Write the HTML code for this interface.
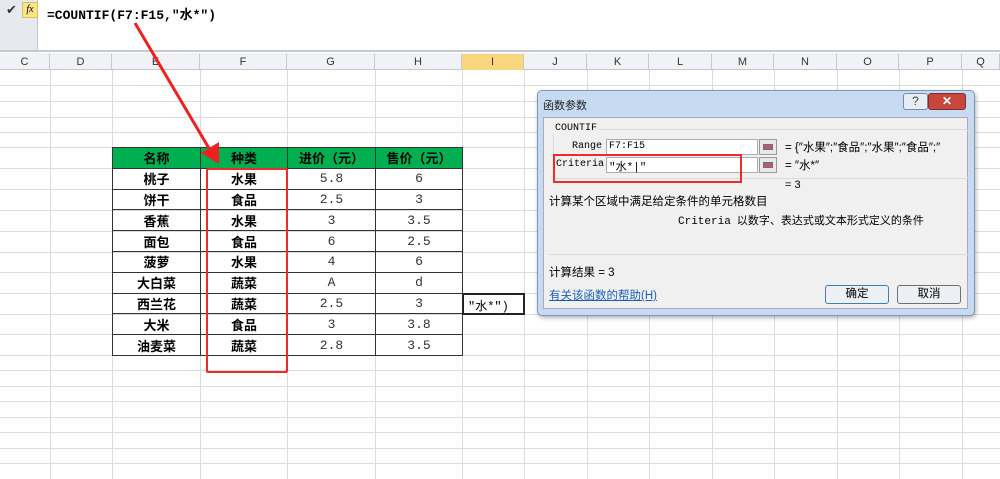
<!DOCTYPE html><html><head><meta charset="utf-8"><style>
*{margin:0;padding:0;box-sizing:border-box}
body{width:1000px;height:479px;overflow:hidden;background:#fff;position:relative;font-family:"Liberation Sans","Noto Sans CJK SC",sans-serif}
.a{position:absolute}
.hl{position:absolute;left:0;width:1000px;height:1px;background:#dadcdd}
.vl{position:absolute;top:70px;height:409px;width:1px;background:#dadcdd}
.ch{position:absolute;top:54px;height:16px;font-size:11px;color:#333;text-align:center;line-height:16px;border-right:1px solid #c5c9cf}
table{position:absolute;left:112px;top:147px;border-collapse:collapse;font-size:13px}
td{border:1px solid #333;height:20.8px;text-align:center;padding:0;font-weight:bold;font-family:"Noto Sans CJK SC",sans-serif}
td.n{font-weight:normal;font-family:"Liberation Mono",monospace;color:#333}
tr.h td{background:#00b050}
.mono{font-family:"Liberation Mono","Noto Sans CJK SC",monospace}
</style></head><body>
<div class="a" style="left:0;top:0;width:1000px;height:52px;background:#fff;border-bottom:2px solid #c5c9cf"></div>
<div class="a" style="left:0;top:0;width:38px;height:50px;background:#e6e9ee;border-right:1px solid #c5c9cf"></div>
<div class="a" style="left:6px;top:2px;font-size:13px;color:#333">✔</div>
<div class="a" style="left:22px;top:2px;width:16px;height:16px;background:#f8e58c;border:1px solid #d8c060;font-size:10px;font-style:italic;font-family:'Liberation Serif';text-align:center;line-height:14px">fx</div>
<div class="a mono" style="left:47px;top:4px;font-size:13px;font-weight:bold">=COUNTIF(F7:F15,″水*″)</div>
<div class="a" style="left:0;top:53px;width:1000px;height:17px;background:#f0f2f5;border-bottom:1px solid #c5c9cf"></div>
<div class="ch" style="left:0;width:50px">C</div><div class="ch" style="left:50px;width:62px">D</div><div class="ch" style="left:112px;width:88px">E</div><div class="ch" style="left:200px;width:87px">F</div><div class="ch" style="left:287px;width:88px">G</div><div class="ch" style="left:375px;width:87px">H</div><div class="ch" style="left:462px;width:62px;background:#f9d77e">I</div><div class="ch" style="left:524px;width:63px">J</div><div class="ch" style="left:587px;width:62px">K</div><div class="ch" style="left:649px;width:63px">L</div><div class="ch" style="left:712px;width:62px">M</div><div class="ch" style="left:774px;width:63px">N</div><div class="ch" style="left:837px;width:62px">O</div><div class="ch" style="left:899px;width:63px">P</div><div class="ch" style="left:962px;width:38px">Q</div>
<div class="hl" style="top:85px"></div><div class="hl" style="top:101px"></div><div class="hl" style="top:117px"></div><div class="hl" style="top:132px"></div><div class="hl" style="top:147px"></div><div class="hl" style="top:168px"></div><div class="hl" style="top:189px"></div><div class="hl" style="top:210px"></div><div class="hl" style="top:231px"></div><div class="hl" style="top:252px"></div><div class="hl" style="top:272px"></div><div class="hl" style="top:293px"></div><div class="hl" style="top:314px"></div><div class="hl" style="top:334px"></div><div class="hl" style="top:355px"></div><div class="hl" style="top:370px"></div><div class="hl" style="top:386px"></div><div class="hl" style="top:401px"></div><div class="hl" style="top:417px"></div><div class="hl" style="top:432px"></div><div class="hl" style="top:448px"></div><div class="hl" style="top:463px"></div>
<div class="vl" style="left:50px"></div><div class="vl" style="left:112px"></div><div class="vl" style="left:200px"></div><div class="vl" style="left:287px"></div><div class="vl" style="left:375px"></div><div class="vl" style="left:462px"></div><div class="vl" style="left:524px"></div><div class="vl" style="left:587px"></div><div class="vl" style="left:649px"></div><div class="vl" style="left:712px"></div><div class="vl" style="left:774px"></div><div class="vl" style="left:837px"></div><div class="vl" style="left:899px"></div><div class="vl" style="left:962px"></div>
<table><colgroup><col style="width:88px"><col style="width:87px"><col style="width:88px"><col style="width:87px"></colgroup>
<tr class="h"><td>名称</td><td>种类</td><td>进价（元）</td><td>售价（元）</td></tr>
<tr><td>桃子</td><td>水果</td><td class="n">5.8</td><td class="n">6</td></tr>
<tr><td>饼干</td><td>食品</td><td class="n">2.5</td><td class="n">3</td></tr>
<tr><td>香蕉</td><td>水果</td><td class="n">3</td><td class="n">3.5</td></tr>
<tr><td>面包</td><td>食品</td><td class="n">6</td><td class="n">2.5</td></tr>
<tr><td>菠萝</td><td>水果</td><td class="n">4</td><td class="n">6</td></tr>
<tr><td>大白菜</td><td>蔬菜</td><td class="n">A</td><td class="n">d</td></tr>
<tr><td>西兰花</td><td>蔬菜</td><td class="n">2.5</td><td class="n">3</td></tr>
<tr><td>大米</td><td>食品</td><td class="n">3</td><td class="n">3.8</td></tr>
<tr><td>油麦菜</td><td>蔬菜</td><td class="n">2.8</td><td class="n">3.5</td></tr>
</table>
<div class="a mono" style="left:462px;top:293px;width:63px;height:22px;border:2px solid #222;font-size:12px;padding:2px 4px">″水*″)</div>
<div class="a" style="left:206px;top:168px;width:82px;height:205px;border:2px solid #ee2b2b;border-radius:2px"></div>
<svg class="a" style="left:0;top:0" width="1000" height="479"><line x1="135" y1="23" x2="210" y2="150" stroke="#ee2020" stroke-width="3"/><polygon points="219,164 201,153 219,142" fill="#ee2020"/></svg>
<div class="a" style="left:537px;top:90px;width:438px;height:226px;background:#c6dbf2;border:1px solid #7b98b8;border-radius:5px;box-shadow:1px 2px 4px rgba(0,0,0,.3)"></div>
<div class="a" style="left:543px;top:97px;font-size:11px;color:#222">函数参数</div>
<div class="a" style="left:903px;top:93px;width:25px;height:17px;background:#e6edf5;border:1px solid #7a8aa0;border-radius:3px;font-size:12px;text-align:center;color:#444">?</div>
<div class="a" style="left:928px;top:93px;width:38px;height:17px;background:#c9463d;border:1px solid #7a3030;border-radius:3px;font-size:12px;text-align:center;color:#fff;font-weight:bold">✕</div>
<div class="a" style="left:543px;top:117px;width:425px;height:192px;background:#f0f0f0;border:1px solid #aab"></div>
<div class="a" style="left:553px;top:129px;width:416px;height:50px;border:1px solid #dcdcdc;border-radius:3px"></div>
<div class="a mono" style="left:553px;top:123px;font-size:10px;background:#f0f0f0;padding:0 2px">COUNTIF</div>
<div class="a mono" style="left:572px;top:141px;font-size:10px">Range</div>
<div class="a mono" style="left:556px;top:159px;font-size:10px">Criteria</div>
<div class="a" style="left:606px;top:139px;width:152px;height:16px;background:#fff;border:1px solid #abadb3"></div>
<div class="a mono" style="left:609px;top:141px;font-size:10px">F7:F15</div>
<div class="a" style="left:606px;top:157px;width:152px;height:16px;background:#fff;border:1px solid #abadb3"></div>
<div class="a mono" style="left:609px;top:158px;font-size:11px">″水*|″</div>
<div class="a" style="left:759px;top:139px;width:18px;height:16px;background:#e8e8e8;border:1px solid #999"><div style="margin:4px 3px;width:10px;height:6px;background:#c55;border:1px solid #579"></div></div>
<div class="a" style="left:759px;top:157px;width:18px;height:16px;background:#e8e8e8;border:1px solid #999"><div style="margin:4px 3px;width:10px;height:6px;background:#c55;border:1px solid #579"></div></div>
<div class="a" style="left:785px;top:139px;font-size:11.5px;white-space:nowrap;width:184px;overflow:hidden">= {″水果″;″食品″;″水果″;″食品″;″</div>
<div class="a" style="left:785px;top:157px;font-size:11.5px">= ″水*″</div>
<div class="a" style="left:785px;top:179px;font-size:11px">= 3</div>
<div class="a" style="left:549px;top:193px;font-size:11.5px">计算某个区域中满足给定条件的单元格数目</div>
<div class="a" style="left:678px;top:212px;font-size:11px"><span class="mono">Criteria</span>&nbsp; 以数字、表达式或文本形式定义的条件</div>
<div class="a" style="left:549px;top:254px;width:420px;height:1px;background:#dcdcdc"></div>
<div class="a" style="left:549px;top:264px;font-size:11.5px">计算结果 = 3</div>
<div class="a" style="left:549px;top:287px;font-size:11.5px;color:#1a5fb4;text-decoration:underline">有关该函数的帮助(H)</div>
<div class="a" style="left:825px;top:285px;width:64px;height:19px;background:#eceff3;border:1px solid #3c7fb1;border-radius:3px;font-size:11.5px;text-align:center;line-height:17px">确定</div>
<div class="a" style="left:897px;top:285px;width:64px;height:19px;background:#eceff3;border:1px solid #707070;border-radius:3px;font-size:11.5px;text-align:center;line-height:17px">取消</div>
<div class="a" style="left:553px;top:154px;width:189px;height:29px;border:2px solid #ee2b2b"></div>
</body></html>
